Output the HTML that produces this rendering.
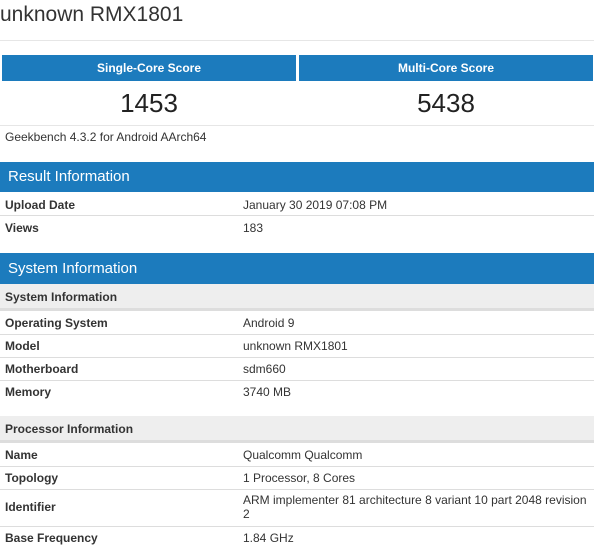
<!DOCTYPE html>
<html><head><style>
body{margin:0;width:602px;height:552px;background:#fff;font-family:"Liberation Sans",Arial,sans-serif;color:#333;position:relative;overflow:hidden}
.a{position:absolute}
.blue{background:#1c7bbd;color:#fff}
.t{font-size:12px;position:absolute;line-height:14px}
.b{font-weight:bold}
.hl{position:absolute;left:0;width:594px;height:1px;background:#ddd}
.gh{position:absolute;left:0;width:594px;background:#eee;border-bottom:3px solid #ddd}
</style></head><body>
<div class="a" style="left:0;top:3px;font-size:21px;color:#333">unknown RMX1801</div>
<div class="hl" style="top:40px;background:#e6e6e6"></div>
<div class="a blue b" style="left:2px;top:55px;width:294px;height:26px;font-size:12px;line-height:26px;text-align:center">Single-Core Score</div>
<div class="a blue b" style="left:299px;top:55px;width:294px;height:26px;font-size:12px;line-height:26px;text-align:center">Multi-Core Score</div>
<div class="a" style="left:2px;top:88px;width:294px;text-align:center;font-size:26px;color:#222">1453</div>
<div class="a" style="left:299px;top:88px;width:294px;text-align:center;font-size:26px;color:#222">5438</div>
<div class="hl" style="top:125px;background:#e6e6e6"></div>
<div class="t" style="left:5px;top:130px">Geekbench 4.3.2 for Android AArch64</div>
<div class="a blue" style="left:0;top:162px;width:594px;height:30px;font-size:15px;line-height:30px;padding-left:8px;box-sizing:border-box">Result Information</div>
<div class="t b" style="left:5px;top:198px">Upload Date</div><div class="t" style="left:243px;top:198px">January 30 2019 07:08 PM</div>
<div class="hl" style="top:215px"></div>
<div class="t b" style="left:5px;top:221px">Views</div><div class="t" style="left:243px;top:221px">183</div>
<div class="a blue" style="left:0;top:253px;width:594px;height:31px;font-size:15px;line-height:31px;padding-left:8px;box-sizing:border-box">System Information</div>
<div class="gh" style="top:284px;height:24px"></div>
<div class="t b" style="left:5px;top:290px">System Information</div>
<div class="t b" style="left:5px;top:316px">Operating System</div><div class="t" style="left:243px;top:316px">Android 9</div>
<div class="hl" style="top:334px"></div>
<div class="t b" style="left:5px;top:339px">Model</div><div class="t" style="left:243px;top:339px">unknown RMX1801</div>
<div class="hl" style="top:357px"></div>
<div class="t b" style="left:5px;top:362px">Motherboard</div><div class="t" style="left:243px;top:362px">sdm660</div>
<div class="hl" style="top:380px"></div>
<div class="t b" style="left:5px;top:385px">Memory</div><div class="t" style="left:243px;top:385px">3740 MB</div>
<div class="gh" style="top:416px;height:24px"></div>
<div class="t b" style="left:5px;top:422px">Processor Information</div>
<div class="t b" style="left:5px;top:448px">Name</div><div class="t" style="left:243px;top:448px">Qualcomm Qualcomm</div>
<div class="hl" style="top:466px"></div>
<div class="t b" style="left:5px;top:471px">Topology</div><div class="t" style="left:243px;top:471px">1 Processor, 8 Cores</div>
<div class="hl" style="top:489px"></div>
<div class="t b" style="left:5px;top:500px">Identifier</div><div class="t" style="left:243px;top:493px;width:350px">ARM implementer 81 architecture 8 variant 10 part 2048 revision 2</div>
<div class="hl" style="top:526px"></div>
<div class="t b" style="left:5px;top:531px">Base Frequency</div><div class="t" style="left:243px;top:531px">1.84 GHz</div>
</body></html>
